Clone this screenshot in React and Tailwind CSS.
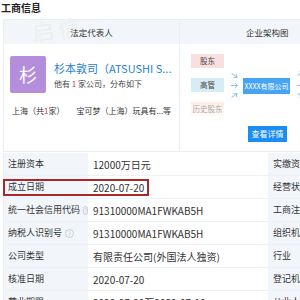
import React from "react";

const rows = [
  ["注册资本", "12000万日元", "实缴资本", false],
  ["成立日期", "2020-07-20", "经营状态", false, true],
  ["统一社会信用代码", "91310000MA1FWKAB5H", "工商注册号", true],
  ["纳税人识别号", "91310000MA1FWKAB5H", "组织机构代码", true],
  ["公司类型", "有限责任公司(外国法人独资)", "行业", false],
  ["核准日期", "2020-07-20", "登记机关", false],
  ["营业期限", "2020-07-20至2050-07-19", "从业人数", false],
];

function Arrow({ className, rotate }) {
  return (
    <svg
      className={className}
      width="9"
      height="9"
      viewBox="0 0 10 10"
      style={{ transform: `rotate(${rotate}deg)` }}
    >
      <path d="M1 5 H8 M5.5 2.5 L8.5 5 L5.5 7.5" stroke="#8ec5ef" strokeWidth="1.1" fill="none" />
    </svg>
  );
}

export default function App() {
  return (
    <div
      className="w-[300px] h-[300px] overflow-hidden bg-white text-[#333]"
      style={{ fontFamily: '"Noto Sans CJK SC", "Noto Sans", sans-serif' }}
    >
      <div className="h-[19px] pl-[1px] text-[10px] leading-[15px] font-bold text-[#222]">工商信息</div>
      <div className="ml-[3px] w-[400px] border border-[#e9eef4] flex">
        <div className="w-[175px] shrink-0 flex flex-col relative">
          <div className="h-[24px] bg-[#f2f6fa] flex items-center justify-center text-[8.5px] text-[#333] relative">
            <span className="absolute left-[28px] top-[-8px] text-[22px] text-[#eceef0] tracking-[4px] rotate-[-8deg]">启信</span>
            <span className="relative">法定代表人</span>
          </div>
          <div className="h-[107px] pl-[6px] pt-[12px] flex flex-col">
            <div className="flex items-start">
              <div className="w-[36px] h-[37px] rounded-[2px] bg-[#b48edb] flex items-center justify-center text-white text-[18px]">杉</div>
              <div className="ml-[8px] flex flex-col">
                <div className="text-[11px] leading-[14px] mt-[5px] text-[#1f7fd8] whitespace-nowrap">杉本敦司（ATSUSHI S...</div>
                <div className="text-[8px] leading-[12px] mt-[3px] text-[#444] whitespace-nowrap">
                  他有 <span className="text-[#e53935]">1</span> 家公司，分布如下
                </div>
              </div>
            </div>
            <div className="mt-[12px] ml-[2px] text-[8px] leading-[12px] text-[#333] whitespace-nowrap flex gap-[12px]">
              <span>上海（共<span className="text-[#e53935]">1</span>家）</span>
              <span>宝可梦（上海）玩具有...等</span>
            </div>
          </div>
        </div>
        <div className="w-[220px] shrink-0 border-l border-[#e9eef4] flex flex-col">
          <div className="h-[24px] bg-[#f2f6fa] flex items-center pl-[66px] text-[8.5px] text-[#333]">企业架构图</div>
          <div className="h-[107px] flex flex-col">
            <div className="relative h-[74px]">
              <div className="absolute left-[11px] top-[10px] w-[33px] h-[14px] bg-[#f9dfe0] flex items-center justify-center text-[7.5px] text-[#444]">股东</div>
              <div className="absolute left-[11px] top-[34px] w-[33px] h-[14px] bg-[#d7edf5] flex items-center justify-center text-[7.5px] text-[#444]">高管</div>
              <div className="absolute left-[11px] top-[58px] w-[33px] h-[14px] bg-gradient-to-b from-[#fdeee6] to-[#fffaf7] flex items-center justify-center text-[7.5px] text-[#aaa]">历史股东</div>
              <Arrow className="absolute left-[50px] top-[27px]" rotate={35} />
              <Arrow className="absolute left-[50px] top-[36.5px]" rotate={0} />
              <Arrow className="absolute left-[50px] top-[47px]" rotate={-35} />
              <div className="absolute left-[63px] top-[34px] w-[47px] h-[16px] bg-[#47a3f3] flex items-center justify-center text-[7px] text-white whitespace-nowrap">XXXX有限公司</div>
              <Arrow className="absolute left-[116px] top-[25px]" rotate={-35} />
              <Arrow className="absolute left-[116px] top-[36.5px]" rotate={0} />
              <Arrow className="absolute left-[116px] top-[47px]" rotate={35} />
              <div className="absolute left-[128px] top-[56px] w-[33px] h-[14px] bg-gradient-to-b from-[#fdeee6] to-[#fffaf7]" />
            </div>
            <div className="ml-[68px] mt-[8px] w-[39px] h-[16px] bg-[#1a8cf2] flex items-center justify-center text-[8px] text-white">查看详情</div>
          </div>
        </div>
      </div>
      <div className="ml-[3px] mt-[1px] w-[400px] flex flex-col border-l border-[#e9eef4]">
        {rows.map(([l1, v1, l2, q, hl], i) => (
          <div key={i} className="h-[23px] flex border-b border-[#eef1f5] relative">
            <div className="w-[84px] shrink-0 bg-[#f2f6fb] flex items-center pl-[4px] text-[9px] text-[#333] whitespace-nowrap">
              {l1}
              {q && (
                <span className="ml-[3px] w-[9px] h-[9px] rounded-full border border-[#c8d0d8] text-[6px] leading-[7px] text-[#b8c0c8] flex items-center justify-center">?</span>
              )}
            </div>
            <div className="w-[180px] shrink-0 flex items-center pl-[5px] text-[10px] text-[#333] whitespace-nowrap">{v1}</div>
            <div className="w-[90px] shrink-0 bg-[#f2f6fb] flex items-center pl-[5px] text-[9px] text-[#333] whitespace-nowrap">{l2}</div>
            {hl && (
              <div className="absolute left-[-1px] top-[3px] w-[146px] h-[17px] border-2 border-[#a8282c]" />
            )}
          </div>
        ))}
      </div>
    </div>
  );
}
